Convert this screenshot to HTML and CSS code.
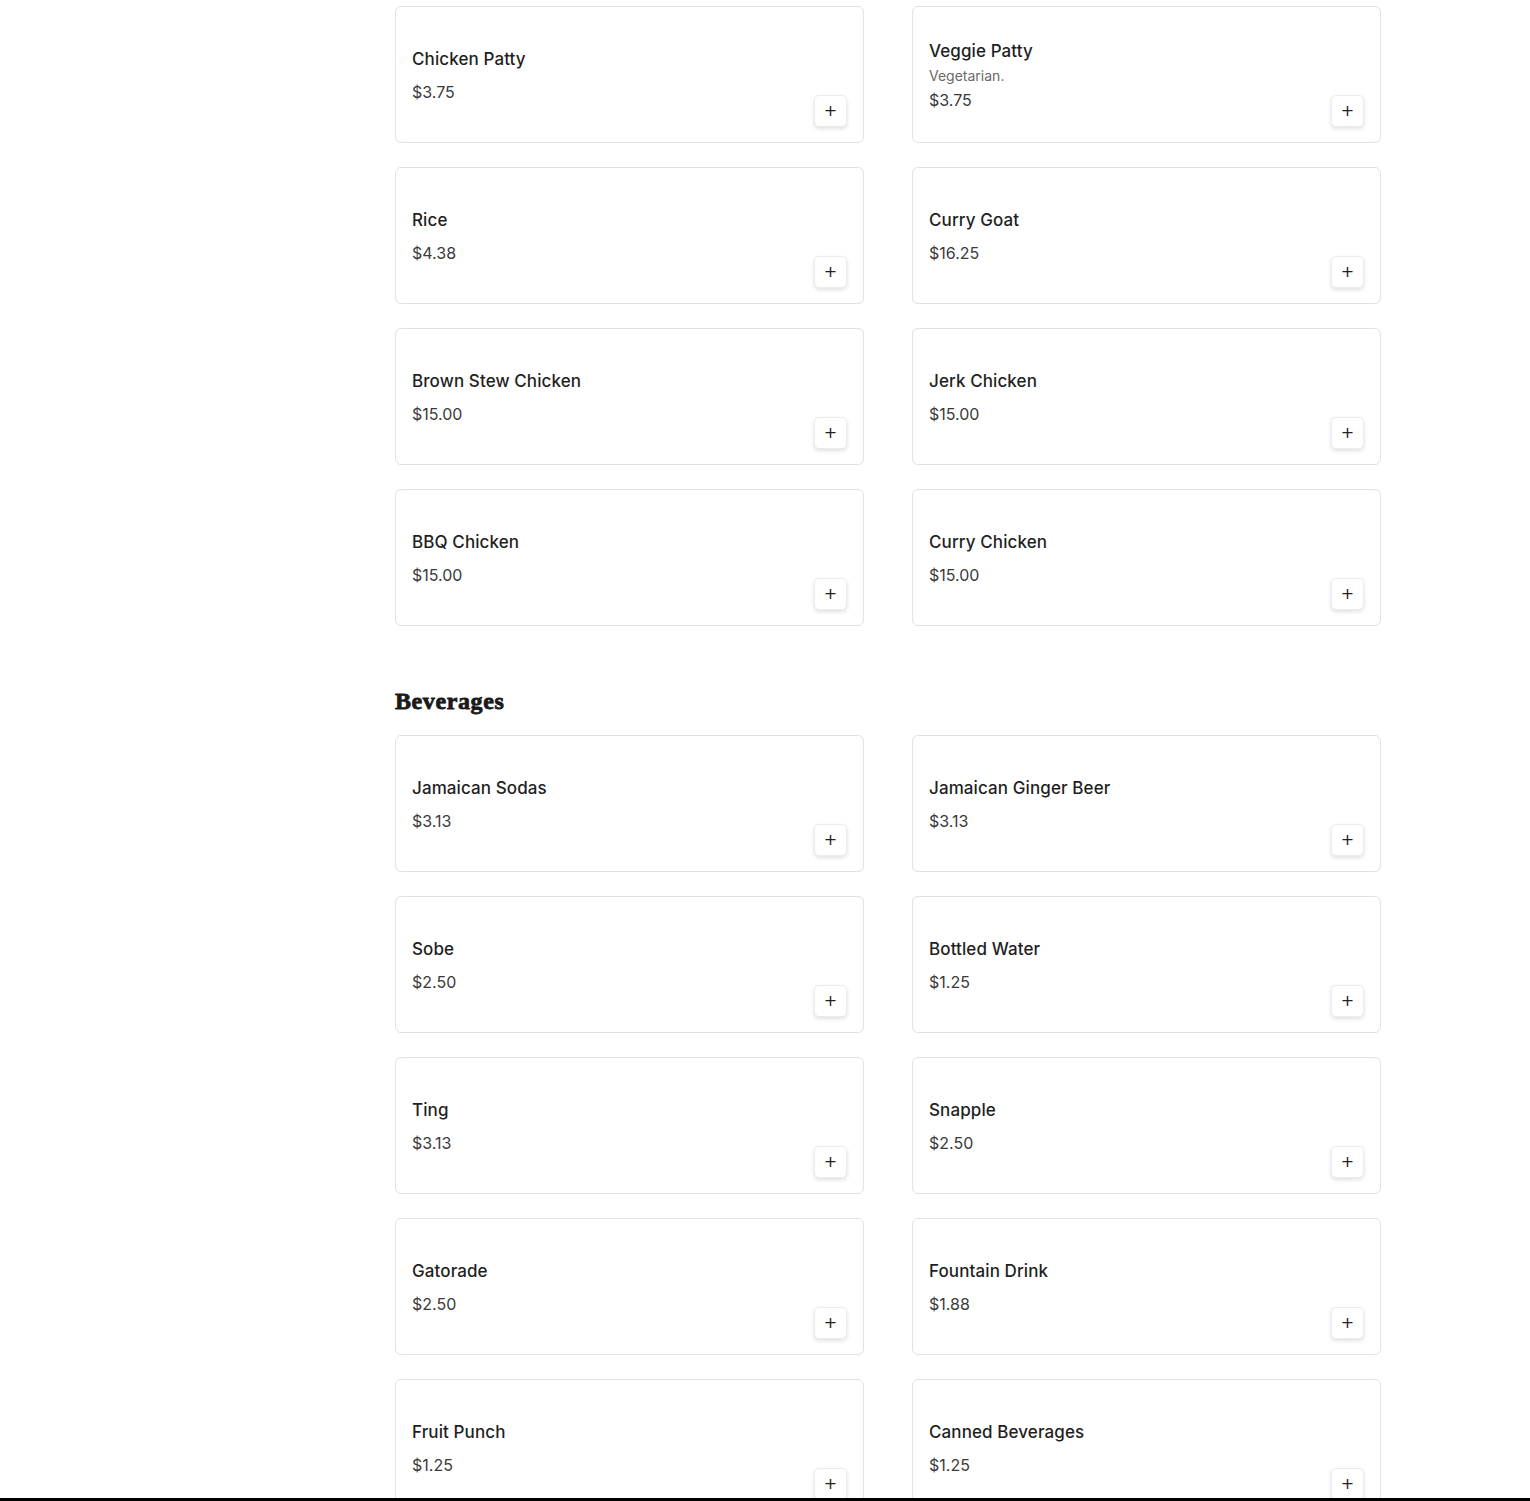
FILE: index.html
```html
<!DOCTYPE html>
<html lang="en">
<head>
<meta charset="utf-8">
<title>Menu</title>
<link rel="stylesheet" href="styles.css">
</head>
<body>
<main class="menu">
  <section class="section">
    <div class="grid">
      <div class="card"><div class="info"><div class="name">Chicken Patty</div><div class="price">$3.75</div></div><button class="add">+</button></div>
      <div class="card"><div class="info"><div class="name">Veggie Patty</div><div class="desc">Vegetarian.</div><div class="price">$3.75</div></div><button class="add">+</button></div>
      <div class="card"><div class="info"><div class="name">Rice</div><div class="price">$4.38</div></div><button class="add">+</button></div>
      <div class="card"><div class="info"><div class="name">Curry Goat</div><div class="price">$16.25</div></div><button class="add">+</button></div>
      <div class="card"><div class="info"><div class="name">Brown Stew Chicken</div><div class="price">$15.00</div></div><button class="add">+</button></div>
      <div class="card"><div class="info"><div class="name">Jerk Chicken</div><div class="price">$15.00</div></div><button class="add">+</button></div>
      <div class="card"><div class="info"><div class="name">BBQ Chicken</div><div class="price">$15.00</div></div><button class="add">+</button></div>
      <div class="card"><div class="info"><div class="name">Curry Chicken</div><div class="price">$15.00</div></div><button class="add">+</button></div>
    </div>
  </section>
  <section class="section">
    <h2 class="section-title">Beverages</h2>
    <div class="grid">
      <div class="card"><div class="info"><div class="name">Jamaican Sodas</div><div class="price">$3.13</div></div><button class="add">+</button></div>
      <div class="card"><div class="info"><div class="name">Jamaican Ginger Beer</div><div class="price">$3.13</div></div><button class="add">+</button></div>
      <div class="card"><div class="info"><div class="name">Sobe</div><div class="price">$2.50</div></div><button class="add">+</button></div>
      <div class="card"><div class="info"><div class="name">Bottled Water</div><div class="price">$1.25</div></div><button class="add">+</button></div>
      <div class="card"><div class="info"><div class="name">Ting</div><div class="price">$3.13</div></div><button class="add">+</button></div>
      <div class="card"><div class="info"><div class="name">Snapple</div><div class="price">$2.50</div></div><button class="add">+</button></div>
      <div class="card"><div class="info"><div class="name">Gatorade</div><div class="price">$2.50</div></div><button class="add">+</button></div>
      <div class="card"><div class="info"><div class="name">Fountain Drink</div><div class="price">$1.88</div></div><button class="add">+</button></div>
      <div class="card"><div class="info"><div class="name">Fruit Punch</div><div class="price">$1.25</div></div><button class="add">+</button></div>
      <div class="card"><div class="info"><div class="name">Canned Beverages</div><div class="price">$1.25</div></div><button class="add">+</button></div>
    </div>
  </section>
</main>
<div class="bottom-bar"></div>
</body>
</html>
```
FILE: styles.css
```css
* { box-sizing: border-box; }
html, body { margin: 0; padding: 0; background: #fff; }
body { font-family: "Inter", "Noto Sans", sans-serif; color: #1f1f1f; }
.menu { width: 986px; margin-left: 395px; padding-top: 6px; }
.section + .section { margin-top: 60px; }
.section-title {
  margin: 0 0 19px;
  font-family: "Liberation Serif", "Times New Roman", serif;
  font-weight: 700;
  font-size: 24px;
  line-height: 30px;
  letter-spacing: 0.6px;
  -webkit-text-stroke: 0.8px #1a1a1a;
  color: #1a1a1a;
}
.grid { display: grid; grid-template-columns: 1fr 1fr; column-gap: 48px; row-gap: 24px; }
.card {
  position: relative;
  height: 137px;
  border: 1px solid #e2e2e2;
  border-radius: 6px;
  background: #fff;
  padding: 0 16px;
  display: flex;
  align-items: center;
}
.info { display: flex; flex-direction: column; }
.name { font-size: 17px; font-weight: 500; line-height: 22px; color: #1f1f1f; letter-spacing: 0.1px; }
.desc { font-size: 14px; line-height: 18px; color: #6a6a6a; margin-top: 5px; }
.price { font-size: 16px; line-height: 20px; color: #3a3a3a; margin-top: 12px; }
.desc + .price { margin-top: 5px; }
.add {
  position: absolute;
  right: 16px;
  bottom: 15px;
  width: 33px;
  height: 32px;
  border: 1px solid #ececec;
  border-radius: 5px;
  background: #fff;
  box-shadow: 0 2px 4px rgba(0,0,0,0.12);
  font-family: "DejaVu Sans", sans-serif;
  font-size: 16px;
  line-height: 1;
  color: #222;
  padding: 0;
}
.bottom-bar { position: fixed; left: 0; right: 0; bottom: 0; height: 3px; background: #000; }
```
